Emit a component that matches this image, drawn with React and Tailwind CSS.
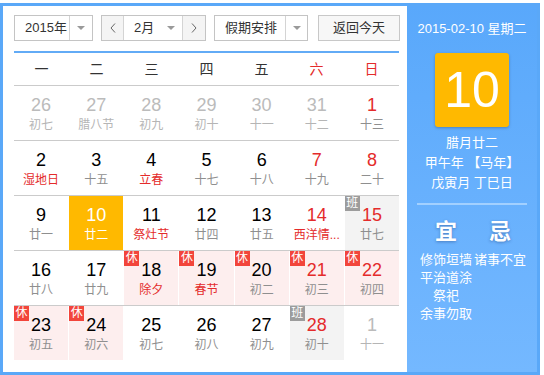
const days = [
  [
    { d: 26, l: "初七", o: true },
    { d: 27, l: "腊八节", o: true },
    { d: 28, l: "初九", o: true },
    { d: 29, l: "初十", o: true },
    { d: 30, l: "十一", o: true },
    { d: 31, l: "十二", o: true },
    { d: 1, l: "十三", r: true },
  ],
  [
    { d: 2, l: "湿地日", lr: true },
    { d: 3, l: "十五" },
    { d: 4, l: "立春", lr: true },
    { d: 5, l: "十七" },
    { d: 6, l: "十八" },
    { d: 7, l: "十九", r: true },
    { d: 8, l: "二十", r: true },
  ],
  [
    { d: 9, l: "廿一" },
    { d: 10, l: "廿二", t: true },
    { d: 11, l: "祭灶节", lr: true },
    { d: 12, l: "廿四" },
    { d: 13, l: "廿五" },
    { d: 14, l: "西洋情...", r: true, lr: true },
    { d: 15, l: "廿七", r: true, tag: "班" },
  ],
  [
    { d: 16, l: "廿八" },
    { d: 17, l: "廿九" },
    { d: 18, l: "除夕", lr: true, tag: "休" },
    { d: 19, l: "春节", lr: true, tag: "休" },
    { d: 20, l: "初二", tag: "休" },
    { d: 21, l: "初三", r: true, tag: "休" },
    { d: 22, l: "初四", r: true, tag: "休" },
  ],
  [
    { d: 23, l: "初五", tag: "休" },
    { d: 24, l: "初六", tag: "休" },
    { d: 25, l: "初七" },
    { d: 26, l: "初八" },
    { d: 27, l: "初九" },
    { d: 28, l: "初十", r: true, tag: "班" },
    { d: 1, l: "十一", o: true },
  ],
];

const weekdays = ["一", "二", "三", "四", "五", "六", "日"];

function Caret() {
  return (
    <svg width="8" height="4" viewBox="0 0 8 4">
      <path d="M0 0 L8 0 L4 4 Z" fill="#9a9a9a" />
    </svg>
  );
}

function Chevron({ dir }) {
  return (
    <svg width="6" height="10" viewBox="0 0 6 10">
      <path
        d={dir === "left" ? "M5 0.5 L1 5 L5 9.5" : "M1 0.5 L5 5 L1 9.5"}
        fill="none"
        stroke="#666"
        strokeWidth="1"
      />
    </svg>
  );
}

function Cell({ c }) {
  let bg = "bg-white";
  if (c.t) bg = "bg-[#ffb900]";
  else if (c.tag === "休") bg = "bg-[#fdeeee]";
  else if (c.tag === "班") bg = "bg-[#f3f3f3]";

  let num = "text-black";
  if (c.o) num = "text-[#bbbbbb]";
  else if (c.t) num = "text-white";
  else if (c.r) num = "text-[#e42b2b]";

  let lunar = "text-[#8f8f8f]";
  if (c.o) lunar = "text-[#b5b5b5]";
  else if (c.t) lunar = "text-white";
  else if (c.lr) lunar = "text-[#e42b2b]";

  return (
    <div className={`relative h-[54px] pt-[9px] text-center ${bg}`}>
      {c.tag && (
        <span
          className={`absolute left-0 top-0 w-[15px] h-[15px] text-[12px] leading-[15px] text-white ${
            c.tag === "休" ? "bg-[#f2453b]" : "bg-[#9c9c9c]"
          }`}
        >
          {c.tag}
        </span>
      )}
      <div className={`text-[18px] leading-[20px] ${num}`}>{c.d}</div>
      <div className={`mt-[2px] text-[12px] leading-[16px] whitespace-nowrap ${lunar}`}>
        {c.l}
      </div>
    </div>
  );
}

export default function App() {
  return (
    <div className="pt-[3px] bg-white font-['Liberation_Sans','Noto_Sans_CJK_SC',sans-serif]">
      <div className="w-[540px] h-[372px] border-[3px] border-[#5aa8f8] flex">
        {/* LEFT */}
        <div className="w-[404px] bg-white pl-[11px] pt-[9px]">
          {/* TOOLBAR */}
          <div className="flex items-center h-[26px] text-[13px] text-[#333]">
            <div className="flex h-[26px] w-[79px] border border-[#c4c4c4]">
              <div className="w-[54px] pl-[10px] leading-[24px]">2015年</div>
              <div className="flex-1 border-l border-[#d4d4d4] flex items-center justify-center">
                <Caret />
              </div>
            </div>

            <div className="ml-[8px] flex h-[26px] w-[105px] border border-[#c4c4c4]">
              <div className="w-[21px] bg-[#f4f4f4] flex items-center justify-center">
                <Chevron dir="left" />
              </div>
              <div className="w-[60px] border-x border-[#d4d4d4] flex items-center pl-[10px] pr-[7px]">
                <span className="flex-1 leading-[24px]">2月</span>
                <Caret />
              </div>
              <div className="flex-1 bg-[#f4f4f4] flex items-center justify-center">
                <Chevron dir="right" />
              </div>
            </div>

            <div className="ml-[8px] flex h-[26px] w-[94px] border border-[#c4c4c4]">
              <div className="w-[70px] pl-[10px] leading-[24px]">假期安排</div>
              <div className="flex-1 border-l border-[#d4d4d4] flex items-center justify-center">
                <Caret />
              </div>
            </div>

            <button className="ml-[10px] h-[26px] w-[82px] border border-[#c8c8c8] bg-[#f7f7f7] leading-[24px] text-[#333]">
              返回今天
            </button>
          </div>

          {/* CALENDAR */}
          <div className="w-[385px] mt-[10px] border-t-2 border-[#62abf6]">
            <div className="grid grid-cols-7 h-[32px] text-[14px] text-center leading-[32px]">
              {weekdays.map((w, i) => (
                <div key={w} className={i > 4 ? "text-[#e42b2b]" : "text-[#333]"}>
                  {w}
                </div>
              ))}
            </div>

            {days.map((row, i) => (
              <div
                key={i}
                className="grid grid-cols-7 gap-x-px border-t border-[#cbcbcb]"
              >
                {row.map((c, j) => (
                  <Cell key={j} c={c} />
                ))}
              </div>
            ))}
          </div>
        </div>

        {/* RIGHT */}
        <div className="flex-1 bg-gradient-to-b from-[#59a8fb] to-[#74b8ff] pt-[14px] text-white text-center">
          <div className="text-[13px] leading-[18px]">2015-02-10 星期二</div>

          <div className="mx-auto mt-[15px] w-[74px] h-[74px] rounded-[3px] bg-[#ffb900] shadow-[0_1px_3px_rgba(0,0,0,0.25)] flex items-center justify-center text-[50px] leading-none">
            10
          </div>

          <div className="mt-[6px] text-[13px] leading-[20px]">
            <div>腊月廿二</div>
            <div>甲午年 【马年】</div>
            <div>戊寅月 丁巳日</div>
          </div>

          <div className="mx-[10px] mt-[10px] h-[2px] bg-[#a2d0ff]" />

          <div className="flex pl-[12px] mt-[13px]">
            <div className="w-[54px]">
              <div className="text-[22px] leading-[28px] font-bold [text-shadow:0_1px_3px_rgba(30,60,120,0.45)]">
                宜
              </div>
              <div className="mt-[5px] text-[13px] leading-[18px]">
                <div>修饰垣墙</div>
                <div>平治道涂</div>
                <div>祭祀</div>
                <div>余事勿取</div>
              </div>
            </div>
            <div className="w-[54px]">
              <div className="text-[22px] leading-[28px] font-bold [text-shadow:0_1px_3px_rgba(30,60,120,0.45)]">
                忌
              </div>
              <div className="mt-[5px] text-[13px] leading-[18px]">
                <div>诸事不宜</div>
              </div>
            </div>
          </div>
        </div>
      </div>
    </div>
  );
}
